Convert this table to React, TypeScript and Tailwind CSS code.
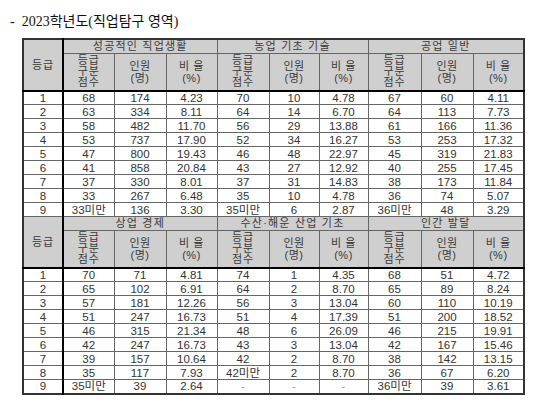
import React from "react";

type Row = string[];

const blocks1 = ["성공적인 직업생활", "농업 기초 기술", "공업 일반"];
const rows1: Row[] = [
  ["1", "68", "174", "4.23", "70", "10", "4.78", "67", "60", "4.11"],
  ["2", "63", "334", "8.11", "64", "14", "6.70", "64", "113", "7.73"],
  ["3", "58", "482", "11.70", "56", "29", "13.88", "61", "166", "11.36"],
  ["4", "53", "737", "17.90", "52", "34", "16.27", "53", "253", "17.32"],
  ["5", "47", "800", "19.43", "46", "48", "22.97", "45", "319", "21.83"],
  ["6", "41", "858", "20.84", "43", "27", "12.92", "40", "255", "17.45"],
  ["7", "37", "330", "8.01", "37", "31", "14.83", "38", "173", "11.84"],
  ["8", "33", "267", "6.48", "35", "10", "4.78", "36", "74", "5.07"],
  ["9", "33미만", "136", "3.30", "35미만", "6", "2.87", "36미만", "48", "3.29"],
];

const blocks2 = ["상업 경제", "수산·해운 산업 기초", "인간 발달"];
const rows2: Row[] = [
  ["1", "70", "71", "4.81", "74", "1", "4.35", "68", "51", "4.72"],
  ["2", "65", "102", "6.91", "64", "2", "8.70", "65", "89", "8.24"],
  ["3", "57", "181", "12.26", "56", "3", "13.04", "60", "110", "10.19"],
  ["4", "51", "247", "16.73", "51", "4", "17.39", "51", "200", "18.52"],
  ["5", "46", "315", "21.34", "48", "6", "26.09", "46", "215", "19.91"],
  ["6", "42", "247", "16.73", "43", "3", "13.04", "42", "167", "15.46"],
  ["7", "39", "157", "10.64", "42", "2", "8.70", "38", "142", "13.15"],
  ["8", "35", "117", "7.93", "42미만", "2", "8.70", "36", "67", "6.20"],
  ["9", "35미만", "39", "2.64", "-", "-", "-", "36미만", "39", "3.61"],
];

const cell = "border border-[#666] p-0 text-center align-middle";
const head = `${cell} bg-[#cfcfcf] text-[11px] text-[#3a3a3a]`;

const HeaderRows = ({ blocks }: { blocks: string[] }) => (
  <>
    <tr>
      <td
        rowSpan={2}
        className={`${head} tracking-[1px] border-r-2 border-r-black border-b-2 border-b-black`}
      >
        등급
      </td>
      {blocks.map((b) => (
        <td key={b} colSpan={3} className={`${head} h-[14px] leading-[13px] tracking-[1.2px]`}>
          {b}
        </td>
      ))}
    </tr>
    <tr>
      {blocks.map((b) => (
        <React.Fragment key={b}>
          <td className={`${head} h-[37px] text-[9.5px] leading-[11px] tracking-[1px] border-b-2 border-b-black`}>
            등급
            <br />
            구분
            <br />
            점수
          </td>
          <td className={`${head} leading-[12px] tracking-[0.5px] border-b-2 border-b-black`}>
            인원
            <br />
            (명)
          </td>
          <td className={`${head} leading-[12px] tracking-[0.5px] border-b-2 border-b-black`}>
            비 율
            <br />
            (%)
          </td>
        </React.Fragment>
      ))}
    </tr>
  </>
);

const DataRows = ({ rows }: { rows: Row[] }) => (
  <>
    {rows.map((r) => (
      <tr key={r[0]}>
        {r.map((v, i) => (
          <td
            key={i}
            className={`${cell} h-[14px] leading-[12px] text-[11.5px] ${
              i === 0 ? "border-r-2 border-r-black" : ""
            } ${v === "-" ? "text-[#999]" : "text-[#333]"}`}
          >
            {v}
          </td>
        ))}
      </tr>
    ))}
  </>
);

export default function App() {
  return (
    <div
      className="w-[542px] h-[412px] bg-white pt-[12px] pl-[10px]"
      style={{ fontFamily: '"Liberation Sans", "Noto Sans CJK KR", sans-serif' }}
    >
      <div
        className="h-[20px] leading-[20px] text-[14px] text-[#111]"
        style={{ fontFamily: '"Liberation Serif", "Noto Sans CJK KR", serif' }}
      >
        -&nbsp; 2023학년도(직업탐구 영역)
      </div>
      <table className="mt-[6px] ml-[12px] w-[501px] table-fixed border-collapse border-2 border-[#333]">
        <colgroup>
          <col className="w-[40px]" />
          <col className="w-[51px]" />
          <col className="w-[52px]" />
          <col className="w-[51px]" />
          <col className="w-[52px]" />
          <col className="w-[50px]" />
          <col className="w-[49px]" />
          <col className="w-[53px]" />
          <col className="w-[52px]" />
          <col className="w-[51px]" />
        </colgroup>
        <tbody>
          <HeaderRows blocks={blocks1} />
          <DataRows rows={rows1} />
          <HeaderRows blocks={blocks2} />
          <DataRows rows={rows2} />
        </tbody>
      </table>
    </div>
  );
}
